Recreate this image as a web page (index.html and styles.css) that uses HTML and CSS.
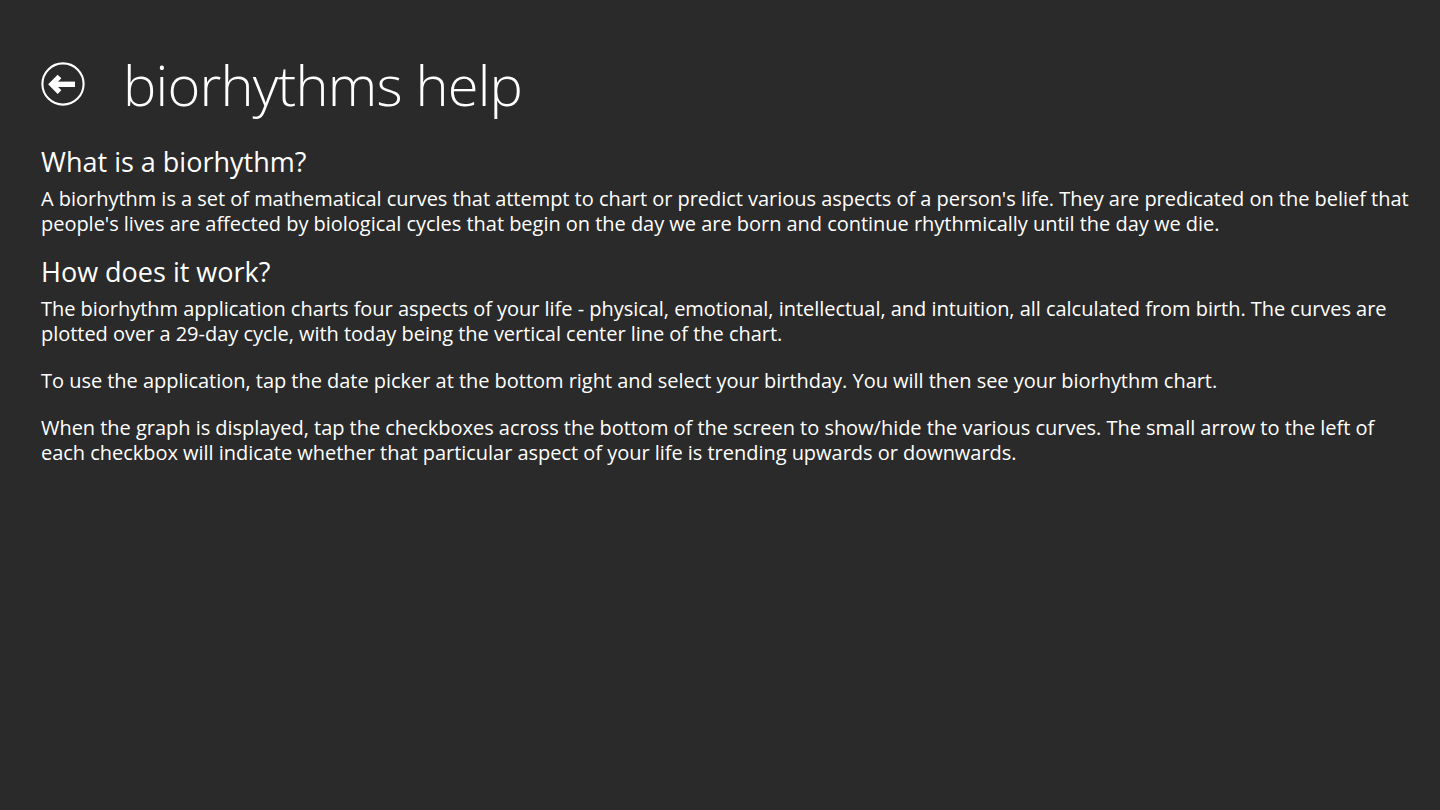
FILE: index.html
```html
<!DOCTYPE html>
<html>
<head>
<meta charset="utf-8">
<link rel="stylesheet" href="styles.css">
</head>
<body>
<div class="page">
  <header class="header">
    <button class="back" aria-label="back">
      <svg width="44" height="44" viewBox="0 0 44 44">
        <circle cx="22" cy="22" r="20.6" fill="none" stroke="#fff" stroke-width="2.1"/>
        <polyline points="18.5,14.5 10.8,22.3 18.5,30.1" fill="none" stroke="#fff" stroke-width="5.2" stroke-linejoin="miter" stroke-miterlimit="10"/>
        <line x1="12" y1="22.3" x2="34" y2="22.3" stroke="#fff" stroke-width="5.4"/>
      </svg>
    </button>
    <h1 class="title">biorhythms help</h1>
  </header>
  <main class="content">
    <h2 class="heading">What is a biorhythm?</h2>
    <p class="para">A biorhythm is a set of mathematical curves that attempt to chart or predict various aspects of a person's life. They are predicated on the belief that<br>people's lives are affected by biological cycles that begin on the day we are born and continue rhythmically until the day we die.</p>
    <h2 class="heading">How does it work?</h2>
    <p class="para">The biorhythm application charts four aspects of your life - physical, emotional, intellectual, and intuition, all calculated from birth. The curves are<br>plotted over a 29-day cycle, with today being the vertical center line of the chart.</p>
    <p class="para">To use the application, tap the date picker at the bottom right and select your birthday. You will then see your biorhythm chart.</p>
    <p class="para">When the graph is displayed, tap the checkboxes across the bottom of the screen to show/hide the various curves. The small arrow to the left of<br>each checkbox will indicate whether that particular aspect of your life is trending upwards or downwards.</p>
  </main>
</div>
</body>
</html>
```
FILE: styles.css
```css
html, body {
  margin: 0;
  padding: 0;
  background: #2a2a2a;
  color: #ffffff;
  font-family: "Open Sans", "Noto Sans", sans-serif;
}
.page {
  width: 1440px;
  height: 810px;
  box-sizing: border-box;
  padding: 52px 0 0 41px;
}
.header {
  display: flex;
  align-items: center;
  gap: 38px;
  height: 64px;
}
.back {
  width: 44px;
  height: 44px;
  padding: 0;
  margin: 0;
  border: 0;
  background: none;
  display: flex;
}
.title {
  margin: 0;
  font-weight: 300;
  font-size: 56px;
  line-height: 64px;
  letter-spacing: -0.8px;
}
.content {
  width: 1390px;
  margin-top: 29px;
}
.heading {
  margin: 0 0 7px 0;
  font-weight: 400;
  font-size: 27px;
  line-height: 34px;
}
.para {
  margin: 0 0 22px 0;
  font-size: 20px;
  line-height: 25px;
  letter-spacing: -0.03px;
  white-space: nowrap;
}
.para + .heading { margin-top: -3px; }
```
